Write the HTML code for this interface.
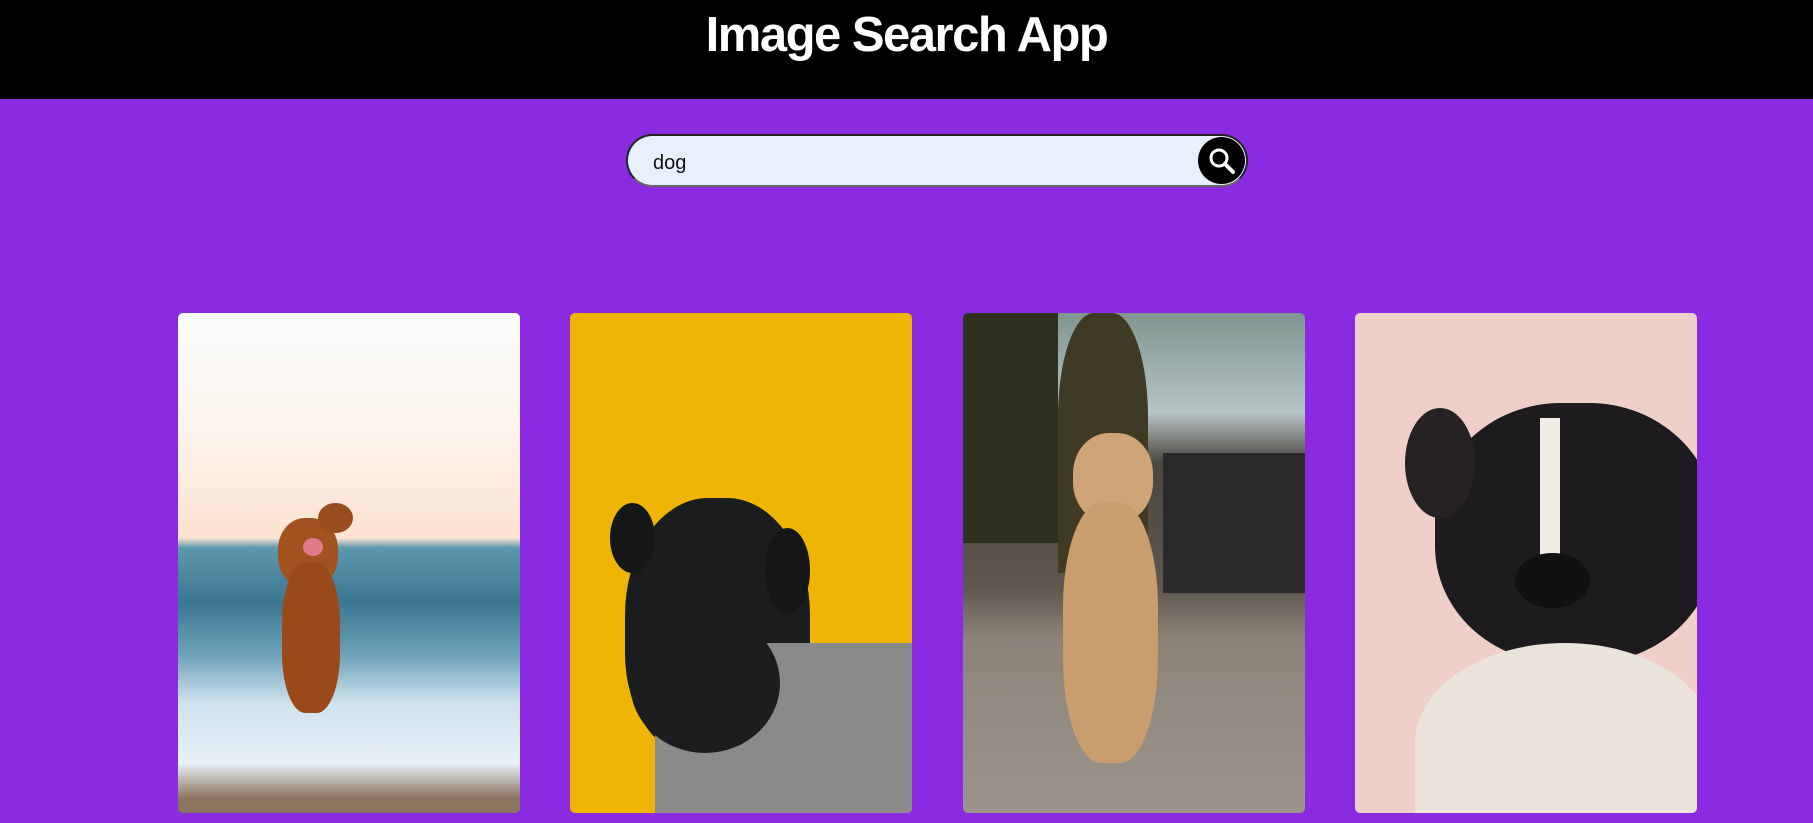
<!DOCTYPE html>
<html><head><meta charset="utf-8"><style>
*{margin:0;padding:0;box-sizing:border-box}
body{width:1813px;height:823px;background:#8a2be2;overflow:hidden;font-family:"Segoe UI","Liberation Sans",sans-serif;position:relative}
.hdr{position:absolute;left:0;top:0;width:1813px;height:99px;background:#000}
.hdr h1{position:absolute;left:0;width:1813px;top:7px;text-align:center;color:#fff;font-size:49px;font-weight:bold;letter-spacing:-1.5px}
.search{position:absolute;left:626px;top:134px;width:622px;height:53px;border:2px solid #222;border-bottom-color:#666;border-radius:27px;background:#e8f0fe}
.search span{position:absolute;left:25px;top:16px;font-size:20px;color:#111}
.btn{position:absolute;right:1px;top:1px;width:47px;height:47px;border-radius:50%;background:#000}
.card{position:absolute;top:313px;width:342px;height:500px;border-radius:5px;overflow:hidden}
.card div{position:absolute}
</style></head><body>
<div class="hdr"><h1>Image Search App</h1></div>
<div class="search"><span>dog</span><div class="btn"><svg width="47" height="47" viewBox="0 0 47 47"><circle cx="21" cy="21" r="8" fill="none" stroke="#fff" stroke-width="3"/><path d="M27 27 L35 35" stroke="#fff" stroke-width="4" stroke-linecap="round"/></svg></div></div>

<div class="card" style="left:178px;background:linear-gradient(#fbfdfe 0%,#fdf3ea 25%,#fce2d0 45%,#5d97ad 47%,#3c7790 58%,#6ba0b8 68%,#cfe2ee 78%,#e8f1f8 90%,#8a7560 97%)">
  <div style="left:100px;top:205px;width:60px;height:70px;border-radius:45%;background:#a2521e"></div>
  <div style="left:140px;top:190px;width:35px;height:30px;border-radius:50%;background:#9a4d1e"></div>
  <div style="left:104px;top:250px;width:58px;height:150px;border-radius:40%;background:#9a4a18"></div>
  <div style="left:125px;top:225px;width:20px;height:18px;border-radius:50%;background:#e27a8c"></div>
</div>

<div class="card" style="left:570px;background:#eeb505">
  <div style="left:55px;top:185px;width:185px;height:260px;border-radius:45% 45% 40% 40%;background:#1b1c1e"></div>
  <div style="left:40px;top:190px;width:45px;height:70px;border-radius:50%;background:#151617"></div>
  <div style="left:195px;top:215px;width:45px;height:85px;border-radius:50%;background:#151617"></div>
  <div style="left:85px;top:330px;width:260px;height:180px;border-radius:40% 0 0 0;background:#8a8a88"></div>
  <div style="left:60px;top:300px;width:150px;height:140px;border-radius:50%;background:#1c1d1f"></div>
</div>

<div class="card" style="left:963px;background:linear-gradient(#7f9590 0%,#b7c4c4 20%,#4a4640 30%,#5e574d 55%,#8c8479 65%,#9a948b 100%)">
  <div style="left:0;top:0;width:95px;height:230px;background:#2e3020"></div>
  <div style="left:95px;top:0;width:90px;height:260px;border-radius:40% 40% 0 0;background:#3e3a24"></div>
  <div style="left:200px;top:140px;width:142px;height:140px;background:#2a2a2c"></div>
  <div style="left:110px;top:120px;width:80px;height:90px;border-radius:45%;background:#cfa577"></div>
  <div style="left:100px;top:190px;width:95px;height:260px;border-radius:40%;background:#c99d6c"></div>
</div>

<div class="card" style="left:1355px;background:#efd0c8">
  <div style="left:80px;top:90px;width:280px;height:260px;border-radius:45%;background:#1d1b1d"></div>
  <div style="left:50px;top:95px;width:70px;height:110px;border-radius:50%;background:#262224"></div>
  <div style="left:185px;top:105px;width:20px;height:140px;background:#f0ece6"></div>
  <div style="left:60px;top:330px;width:300px;height:200px;border-radius:50% 50% 0 0;background:#e9e3da"></div>
  <div style="left:160px;top:240px;width:75px;height:55px;border-radius:50%;background:#111"></div>
</div>
</body></html>
